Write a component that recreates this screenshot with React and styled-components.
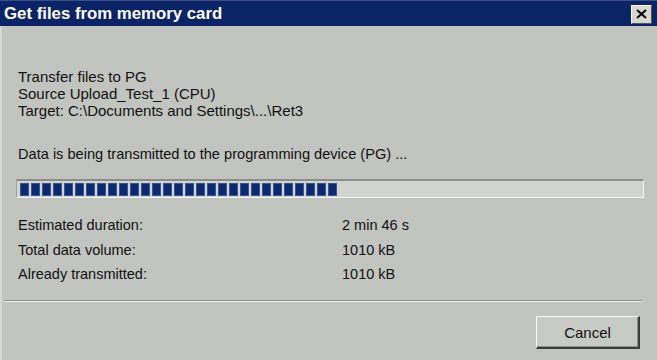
import React from "react";
import styled, { createGlobalStyle } from "styled-components";

const Global = createGlobalStyle`
  html, body { margin: 0; padding: 0; background: #c2c4bf; }
  body { width: 657px; height: 360px; overflow: hidden; }
`;

const Window = styled.div`
  width: 657px;
  height: 360px;
  background: #c2c4bf;
  box-sizing: border-box;
  border-left: 2px solid #d6d8d3;
  display: flex;
  flex-direction: column;
  font-family: "Liberation Sans", Arial, sans-serif;
  color: #111;
`;

const TitleBar = styled.div`
  height: 26px;
  background: #0b2466;
  border-top: 1px solid #3a4f8a;
  box-sizing: border-box;
  margin-left: -2px;
  padding: 0 5px 0 4px;
  display: flex;
  align-items: center;
  justify-content: space-between;
`;

const Title = styled.div`
  font-family: "Liberation Sans", Arial, sans-serif;
  font-weight: bold;
  font-size: 16.8px;
  color: #fff;
  margin-top: 1px;
`;

const CloseButton = styled.div`
  width: 21px;
  height: 19px;
  box-sizing: border-box;
  background: #d6d7d2;
  border-top: 1px solid #fff;
  border-left: 1px solid #fff;
  border-right: 1px solid #555;
  border-bottom: 1px solid #555;
  display: flex;
  align-items: center;
  justify-content: center;
  margin-top: 1px;
`;

const Content = styled.div`
  padding: 42px 0 0 16px;
  display: flex;
  flex-direction: column;
  flex: 1;
`;

const TextBlock = styled.div`
  font-size: ${(p) => p.$size || 15}px;
  line-height: 17px;
  margin-top: ${(p) => p.$top || 0}px;
  white-space: pre;
`;

const Progress = styled.div`
  margin: 16px 0 0 -2px;
  width: 628px;
  height: 19px;
  box-sizing: border-box;
  background: #d2d4d0;
  border-top: 2px solid #8c8e8a;
  border-left: 1px solid #a0a29e;
  border-bottom: 1px solid #f4f4f2;
  border-right: 1px solid #f4f4f2;
  padding: 2px 3px;
  display: flex;
  gap: 2px;
`;

const Block = styled.div`
  width: 9px;
  height: 13px;
  box-sizing: border-box;
  background: #0c2a70;
  border: 1px solid #3a5590;
`;

const InfoGrid = styled.div`
  margin-top: 15px;
  display: grid;
  grid-template-columns: 324px auto;
  grid-auto-rows: 24.4px;
  align-items: center;
  font-size: 14.5px;
`;

const Separator = styled.div`
  margin: 14px 0 0 -14px;
  width: 638px;
  height: 1px;
  background: #8a8c88;
  border-bottom: 1px solid #f2f3f0;
`;

const Footer = styled.div`
  display: flex;
  justify-content: flex-end;
  padding: 14px 17px 0 0;
`;

const Button = styled.button`
  width: 104px;
  height: 33px;
  box-sizing: border-box;
  background: #c8cac5;
  border-top: 1px solid #fafafa;
  border-left: 1px solid #fafafa;
  border-right: 2px solid #3c3e3a;
  border-bottom: 2px solid #3c3e3a;
  box-shadow: inset -1px -1px 0 #8c8e8a;
  font-family: "Liberation Sans", Arial, sans-serif;
  font-size: 15px;
  color: #111;
  padding: 0;
`;

export default function App() {
  const blocks = Array.from({ length: 29 });
  return (
    <>
      <Global />
      <Window>
        <TitleBar>
          <Title>Get files from memory card</Title>
          <CloseButton>
            <svg width="11" height="10" viewBox="0 0 11 10">
              <path d="M1 1 L10 9 M10 1 L1 9" stroke="#000" strokeWidth="2" />
            </svg>
          </CloseButton>
        </TitleBar>
        <Content>
          <TextBlock>
            <div>Transfer files to PG</div>
            <div>Source Upload_Test_1 (CPU)</div>
            <div>Target: C:\Documents and Settings\...\Ret3</div>
          </TextBlock>
          <TextBlock $top={27} $size={14.6}>
            Data is being transmitted to the programming device (PG) ...
          </TextBlock>
          <Progress>
            {blocks.map((_, i) => (
              <Block key={i} />
            ))}
          </Progress>
          <InfoGrid>
            <div>Estimated duration:</div>
            <div>2 min 46 s</div>
            <div>Total data volume:</div>
            <div>1010 kB</div>
            <div>Already transmitted:</div>
            <div>1010 kB</div>
          </InfoGrid>
          <Separator />
          <Footer>
            <Button>Cancel</Button>
          </Footer>
        </Content>
      </Window>
    </>
  );
}
